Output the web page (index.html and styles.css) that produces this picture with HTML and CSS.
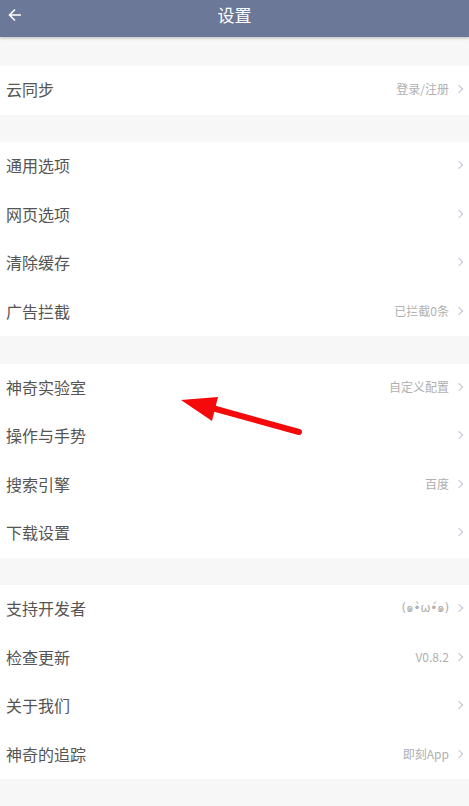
FILE: index.html
```html
<!DOCTYPE html>
<html lang="zh-CN">
<head>
    <meta charset="UTF-8">
    <meta name="viewport" content="width=device-width, initial-scale=1.0">
    <title>设置</title>

    <link rel="stylesheet" href="styles.css">
</head>

<body>
    <div class="header">
        <svg class="back" width="14" height="14" viewBox="0 0 14 14">
            <path d="M13 7H2M7 1.5L1.5 7L7 12.5" fill="none" stroke="#fff" stroke-width="1.6"/>
        </svg>
        <h1>设置</h1>
    </div>

    <div class="group">
        <div class="row"><span class="label">云同步</span><span class="value">登录/注册</span><i class="more"></i></div>
    </div>

    <div class="group">
        <div class="row"><span class="label">通用选项</span><span class="value"></span><i class="more"></i></div>
        <div class="row"><span class="label">网页选项</span><span class="value"></span><i class="more"></i></div>
        <div class="row"><span class="label">清除缓存</span><span class="value"></span><i class="more"></i></div>
        <div class="row"><span class="label">广告拦截</span><span class="value">已拦截0条</span><i class="more"></i></div>
    </div>

    <div class="group">
        <div class="row"><span class="label">神奇实验室</span><span class="value">自定义配置</span><i class="more"></i></div>
        <div class="row"><span class="label">操作与手势</span><span class="value"></span><i class="more"></i></div>
        <div class="row"><span class="label">搜索引擎</span><span class="value">百度</span><i class="more"></i></div>
        <div class="row"><span class="label">下载设置</span><span class="value"></span><i class="more"></i></div>
    </div>

    <div class="group">
        <div class="row"><span class="label">支持开发者</span><span class="value face">(๑•̀ω•́๑)</span><i class="more"></i></div>
        <div class="row"><span class="label">检查更新</span><span class="value">V0.8.2</span><i class="more"></i></div>
        <div class="row"><span class="label">关于我们</span><span class="value"></span><i class="more"></i></div>
        <div class="row"><span class="label">神奇的追踪</span><span class="value">即刻App</span><i class="more"></i></div>
    </div>

    <!-- 标注箭头 -->
    <svg class="mark" width="469" height="806" viewBox="0 0 469 806">
        <line x1="299" y1="432" x2="205" y2="406" stroke="#f40a0a" stroke-width="6" stroke-linecap="round"/>
        <polygon points="181,400 218,397 212,421" fill="#f40a0a"/>
    </svg>
</body>
</html>
```

FILE: styles.css
```css
* {
  margin: 0;
  padding: 0;
  box-sizing: border-box;
}

body {
  width: 469px;
  height: 806px;
  overflow: hidden;
  background: #f7f7f7;
  font-family: "Noto Sans CJK SC", "Noto Sans", sans-serif;
  position: relative;
}

.header {
  height: 37px;
  background: #6b7897;
  display: flex;
  align-items: center;
  justify-content: center;
  position: relative;
  box-shadow: 0 1px 3px rgba(0, 0, 0, 0.25);
  margin-bottom: 29px;
}

.header h1 {
  font-size: 17px;
  line-height: 20px;
  font-weight: normal;
  color: #fff;
  margin-bottom: 7px;
}

.header .back {
  position: absolute;
  left: 8px;
  top: 8px;
}

.group {
  background: #fff;
  margin-bottom: 27.5px;
}

.row {
  height: 48.5px;
  display: flex;
  align-items: center;
  padding: 0 5px 2px 6px;
}

.label {
  flex: 1;
  font-size: 16px;
  line-height: 20px;
  color: #555;
}

.value {
  font-size: 12px;
  line-height: 16px;
  color: #b0b0b0;
  margin-right: 7px;
}

.value.face {
  font-family: "DejaVu Sans", sans-serif;
  font-size: 12px;
  letter-spacing: -0.3px;
}

.more {
  width: 6px;
  height: 6px;
  border-top: 1px solid #c4c4d4;
  border-right: 1px solid #c4c4d4;
  transform: rotate(45deg);
  margin-right: 2px;
}

.mark {
  position: absolute;
  left: 0;
  top: 0;
}
```
